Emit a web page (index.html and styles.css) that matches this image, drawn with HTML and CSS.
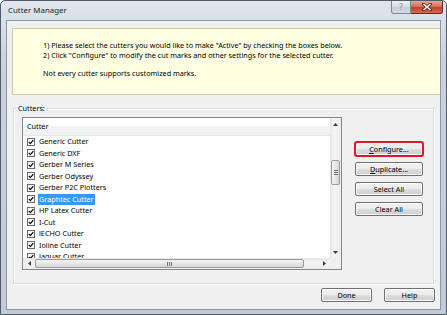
FILE: index.html
```html
<!DOCTYPE html>
<html lang="en">
<head>
    <meta charset="UTF-8">
    <meta name="viewport" content="width=device-width, initial-scale=1.0">
    <title>Cutter Manager</title>
    <link rel="stylesheet" href="styles.css">
</head>
<body>
    <div class="window">
        <!-- Title bar -->
        <div class="titlebar">
            <span class="title">Cutter Manager</span>
            <div class="caption">
                <span class="cap-help">?</span>
                <span class="cap-close">
                    <svg width="10" height="8" viewBox="0 0 10 8">
                        <path d="M1.5 1 L8.5 7 M8.5 1 L1.5 7" stroke="#6b2a20" stroke-width="3" stroke-linecap="square"/>
                        <path d="M1.5 1 L8.5 7 M8.5 1 L1.5 7" stroke="#fff" stroke-width="1.6"/>
                    </svg>
                </span>
            </div>
        </div>

        <div class="client">
            <!-- Info panel -->
            <div class="info">
                <p>1) Please select the cutters you would like to make "Active" by checking the boxes below.<br>
                2) Click "Configure" to modify the cut marks and other settings for the selected cutter.</p>
                <p>Not every cutter supports customized marks.</p>
            </div>

            <fieldset class="group">
                <legend>Cutters:</legend>
                <div class="group-body">
                    <div class="listbox">
                        <div class="list-view">
                            <div class="list-header">Cutter</div>
                            <ul class="rows">
                                <li><svg class="chk" viewBox="0 0 9 9"><rect x="0.5" y="0.5" width="8" height="8" fill="#fff" stroke="#5a5a5a"/><path d="M2 4.4 L3.8 6.3 L7.1 2.4" fill="none" stroke="#000" stroke-width="1.4"/></svg><span>Generic Cutter</span></li>
                                <li><svg class="chk" viewBox="0 0 9 9"><rect x="0.5" y="0.5" width="8" height="8" fill="#fff" stroke="#5a5a5a"/><path d="M2 4.4 L3.8 6.3 L7.1 2.4" fill="none" stroke="#000" stroke-width="1.4"/></svg><span>Generic DXF</span></li>
                                <li><svg class="chk" viewBox="0 0 9 9"><rect x="0.5" y="0.5" width="8" height="8" fill="#fff" stroke="#5a5a5a"/><path d="M2 4.4 L3.8 6.3 L7.1 2.4" fill="none" stroke="#000" stroke-width="1.4"/></svg><span>Gerber M Series</span></li>
                                <li><svg class="chk" viewBox="0 0 9 9"><rect x="0.5" y="0.5" width="8" height="8" fill="#fff" stroke="#5a5a5a"/><path d="M2 4.4 L3.8 6.3 L7.1 2.4" fill="none" stroke="#000" stroke-width="1.4"/></svg><span>Gerber Odyssey</span></li>
                                <li><svg class="chk" viewBox="0 0 9 9"><rect x="0.5" y="0.5" width="8" height="8" fill="#fff" stroke="#5a5a5a"/><path d="M2 4.4 L3.8 6.3 L7.1 2.4" fill="none" stroke="#000" stroke-width="1.4"/></svg><span>Gerber P2C Plotters</span></li>
                                <li><svg class="chk" viewBox="0 0 9 9"><rect x="0.5" y="0.5" width="8" height="8" fill="#fff" stroke="#5a5a5a"/><path d="M2 4.4 L3.8 6.3 L7.1 2.4" fill="none" stroke="#000" stroke-width="1.4"/></svg><span class="selected">Graphtec Cutter</span></li>
                                <li><svg class="chk" viewBox="0 0 9 9"><rect x="0.5" y="0.5" width="8" height="8" fill="#fff" stroke="#5a5a5a"/><path d="M2 4.4 L3.8 6.3 L7.1 2.4" fill="none" stroke="#000" stroke-width="1.4"/></svg><span>HP Latex Cutter</span></li>
                                <li><svg class="chk" viewBox="0 0 9 9"><rect x="0.5" y="0.5" width="8" height="8" fill="#fff" stroke="#5a5a5a"/><path d="M2 4.4 L3.8 6.3 L7.1 2.4" fill="none" stroke="#000" stroke-width="1.4"/></svg><span>I-Cut</span></li>
                                <li><svg class="chk" viewBox="0 0 9 9"><rect x="0.5" y="0.5" width="8" height="8" fill="#fff" stroke="#5a5a5a"/><path d="M2 4.4 L3.8 6.3 L7.1 2.4" fill="none" stroke="#000" stroke-width="1.4"/></svg><span>iECHO Cutter</span></li>
                                <li><svg class="chk" viewBox="0 0 9 9"><rect x="0.5" y="0.5" width="8" height="8" fill="#fff" stroke="#5a5a5a"/><path d="M2 4.4 L3.8 6.3 L7.1 2.4" fill="none" stroke="#000" stroke-width="1.4"/></svg><span>Ioline Cutter</span></li>
                                <li><svg class="chk" viewBox="0 0 9 9"><rect x="0.5" y="0.5" width="8" height="8" fill="#fff" stroke="#5a5a5a"/><path d="M2 4.4 L3.8 6.3 L7.1 2.4" fill="none" stroke="#000" stroke-width="1.4"/></svg><span>Jaguar Cutter</span></li>
                            </ul>
                        </div>

                        <!-- Vertical scrollbar -->
                        <div class="vscroll">
                            <div class="arrow"><svg width="5" height="3" viewBox="0 0 5 3"><path d="M0 3 L2.5 0 L5 3Z" fill="#3b3b3b"/></svg></div>
                            <div class="vtrack">
                                <div class="vthumb"><span class="grip"></span></div>
                            </div>
                            <div class="arrow"><svg width="5" height="3" viewBox="0 0 5 3"><path d="M0 0 L2.5 3 L5 0Z" fill="#3b3b3b"/></svg></div>
                        </div>

                        <!-- Horizontal scrollbar -->
                        <div class="hscroll">
                            <div class="arrow"><svg width="3" height="5" viewBox="0 0 3 5"><path d="M3 0 L0 2.5 L3 5Z" fill="#3b3b3b"/></svg></div>
                            <div class="htrack">
                                <div class="hthumb"><span class="grip"></span></div>
                            </div>
                            <div class="arrow"><svg width="3" height="5" viewBox="0 0 3 5"><path d="M0 0 L3 2.5 L0 5Z" fill="#3b3b3b"/></svg></div>
                        </div>
                        <div class="corner"></div>
                    </div>

                    <div class="side-buttons">
                        <button class="btn btn-marked"><u>C</u>onfigure...</button>
                        <button class="btn"><u>D</u>uplicate...</button>
                        <button class="btn">Select All</button>
                        <button class="btn">Clear All</button>
                    </div>
                </div>
            </fieldset>

            <div class="footer">
                <button class="btn btn-wide">Done</button>
                <button class="btn btn-wide">Help</button>
            </div>
        </div>
    </div>
</body>
</html>
```

FILE: styles.css
```css
body {
    margin: 0;
    padding: 0;
    font-family: "Noto Sans", "Open Sans", sans-serif;
    font-size: 7.25px;
    color: #000;
    background: #fff;
}

/* Window frame */
.window {
    width: 447px;
    height: 315px;
    box-sizing: border-box;
    border: 1px solid #4f5b68;
    border-radius: 5px 5px 0 0;
    background: linear-gradient(#dfe6ee, #cad3dd 60px, #c2cbd5);
    overflow: hidden;
}
.titlebar {
    height: 19px;
    display: flex;
    justify-content: space-between;
    align-items: flex-start;
    padding: 0 3px 0 7px;
}
.title {
    line-height: 19px;
    font-size: 7.9px;
    color: #1b1b1b;
}
.caption {
    display: flex;
}
.cap-help {
    width: 20px;
    height: 13px;
    box-sizing: border-box;
    border: 1px solid #7d8793;
    border-top: none;
    border-radius: 0 0 0 3px;
    background: linear-gradient(#eef2f6, #d3dbe4 50%, #c4ced9 51%, #d5dde6);
    color: #7a8591;
    font-size: 8px;
    line-height: 12px;
    text-align: center;
}
.cap-close {
    width: 32px;
    height: 13px;
    box-sizing: border-box;
    border: 1px solid #6e2b24;
    border-top: none;
    border-left: none;
    border-radius: 0 0 3px 0;
    background: linear-gradient(#e7a899, #d2705c 45%, #c1412c 55%, #d4684e);
    display: flex;
    align-items: center;
    justify-content: center;
}

.client {
    margin: 0 5px;
    height: 290px;
    box-sizing: border-box;
    border: 1px solid #8a97a5;
    background: #f0f0f0;
}

/* Yellow info panel */
.info {
    margin: 7px 0 0 5px;
    height: 67px;
    box-sizing: border-box;
    border: 1px solid #c9c9b3;
    border-right: none;
    background: #ffffe1;
    padding: 12.3px 0 0 30px;
    line-height: 9.3px;
}
.info p {
    margin: 0 0 9.3px;
}

/* Group box */
.group {
    margin: 8px 6px 0 6px;
    padding: 0 0 13px 8px;
    border: 1px solid #d5dfe5;
    box-shadow: inset 1px 1px 0 #fff, 1px 1px 0 #fff;
    min-inline-size: 0;
}
.group legend {
    margin-left: -5px;
    padding: 0 1px;
    line-height: 10px;
}
.group-body {
    display: flex;
    align-items: flex-start;
    padding-top: 4px;
}

/* List view */
.listbox {
    width: 320px;
    height: 153px;
    box-sizing: border-box;
    border: 1px solid #828790;
    background: #fff;
    display: grid;
    grid-template-columns: 1fr 11px;
    grid-template-rows: 1fr 11px;
}
.list-view {
    overflow: hidden;
}
.list-header {
    height: 18px;
    box-sizing: border-box;
    padding-left: 4px;
    line-height: 17px;
    background: linear-gradient(#fff 50%, #f1f2f4 50%);
    border-bottom: 1px solid #e3e6ea;
}
.rows {
    list-style: none;
    margin: 0;
    padding: 0;
}
.rows li {
    height: 11.5px;
    display: flex;
    align-items: center;
    padding-left: 4px;
}
.chk {
    width: 8px;
    height: 8px;
    margin-right: 3px;
    flex-shrink: 0;
}
.rows span {
    padding: 0 1px;
    line-height: 11px;
}
.rows .selected {
    background: #3399ff;
    color: #fff;
}

/* Scrollbars */
.vscroll {
    display: flex;
    flex-direction: column;
    background: linear-gradient(90deg, #e6e6e6, #f5f5f5 40%, #ececec);
}
.hscroll {
    display: flex;
    background: linear-gradient(#e6e6e6, #f5f5f5 40%, #ececec);
}
.corner {
    background: #f0f0f0;
}
.arrow {
    width: 11px;
    height: 12px;
    display: flex;
    align-items: center;
    justify-content: center;
    flex-shrink: 0;
}
.hscroll .arrow {
    width: 12px;
    height: 11px;
}
.vtrack {
    flex: 1;
    padding: 30px 1px 0;
}
.vthumb {
    height: 25px;
    box-sizing: border-box;
    border: 1px solid #9a9a9a;
    border-radius: 2px;
    background: linear-gradient(90deg, #f4f4f4, #e6e6e6 50%, #d6d6d6);
    display: flex;
    align-items: center;
    justify-content: center;
}
.vthumb .grip {
    width: 4px;
    height: 5px;
    background: repeating-linear-gradient(#6f6f6f 0 1px, transparent 1px 2px);
}
.htrack {
    flex: 1;
    padding: 1px 0;
}
.hthumb {
    width: 269px;
    height: 100%;
    box-sizing: border-box;
    border: 1px solid #9a9a9a;
    border-radius: 2px;
    background: linear-gradient(#f4f4f4, #e6e6e6 50%, #d6d6d6);
    display: flex;
    align-items: center;
    justify-content: center;
}
.hthumb .grip {
    width: 5px;
    height: 4px;
    background: repeating-linear-gradient(90deg, #6f6f6f 0 1px, transparent 1px 2px);
}

/* Buttons */
.btn {
    font-family: inherit;
    font-size: 7.25px;
    color: #000;
    width: 68px;
    height: 14px;
    padding: 0;
    box-sizing: border-box;
    border: 1px solid #707070;
    border-radius: 2px;
    background: linear-gradient(#f2f2f2, #ebebeb 50%, #dddddd 50%, #cfcfcf);
    box-shadow: inset 0 0 0 1px rgba(255, 255, 255, 0.8);
    line-height: 12px;
}
.btn u {
    text-decoration-thickness: 1px;
    text-underline-offset: 1px;
}
.btn-marked {
    outline: 2px solid #e3162c;
    outline-offset: -1px;
}
.side-buttons {
    display: flex;
    flex-direction: column;
    gap: 6px;
    margin: 25px 0 0 13px;
}
.footer {
    display: flex;
    justify-content: flex-end;
    gap: 12px;
    margin-top: 4px;
    padding-right: 5px;
}
.btn-wide {
    width: 51px;
}
```
